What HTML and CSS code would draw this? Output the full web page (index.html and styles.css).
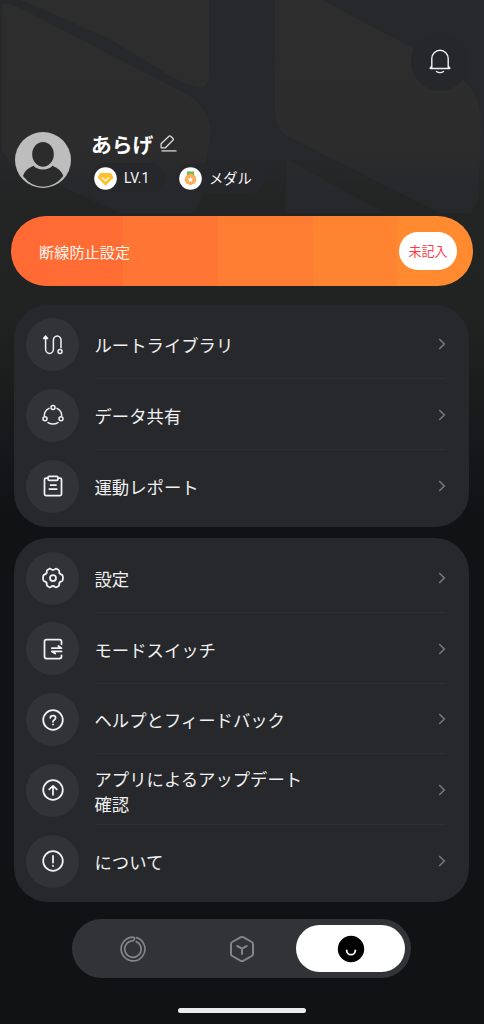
FILE: index.html
```html
<!DOCTYPE html>
<html lang="ja">
<head>
<meta charset="utf-8">
<title>マイページ</title>
<link rel="stylesheet" href="styles.css">
</head>
<body>
<main class="screen">
  <svg class="map" viewBox="0 0 484 540" aria-hidden="true">
    <defs>
      <linearGradient id="road" gradientUnits="userSpaceOnUse" x1="0" y1="0" x2="0" y2="540">
        <stop offset="0" stop-color="#27282c"/><stop offset=".26" stop-color="#27282c"/>
        <stop offset=".37" stop-color="#232524"/><stop offset=".58" stop-color="#212322"/>
        <stop offset=".95" stop-color="#111214"/>
      </linearGradient>
      <linearGradient id="land" gradientUnits="userSpaceOnUse" x1="0" y1="0" x2="0" y2="215">
        <stop offset="0" stop-color="#2d2d2d"/><stop offset=".68" stop-color="#2c2c2c"/>
        <stop offset=".9" stop-color="#27282c"/><stop offset="1" stop-color="#26272a"/>
      </linearGradient>
    </defs>
    <rect width="484" height="540" fill="url(#road)"/>
    <g fill="url(#land)">
      <path d="M22 0H209V74Q209 88 197 87Q185 84 174 78L110 39Z"/>
      <path d="M2 4Q10 3 20 8L180 91Q207 103 211 130L203 180Q202 205 195 213H120L10 162L2 150Z"/>
      <path d="M275 0H322L412 48L462 80Q478 90 481 120L478 200L470 213H440L287 136Q275 127 275 110Z"/>
      <path d="M287 160L385 213H285Z"/>
    </g>
  </svg>

  <header class="top">
    <button class="bell" aria-label="通知">
      <svg width="24" height="26" viewBox="0 0 24 26" fill="none" stroke="#f2f2f2" stroke-width="1.4" stroke-linecap="round" stroke-linejoin="round"><path d="M3.8 18.200V9.500a8.200 8.200 0 0 1 16.400 0v8.700M2.200 19.500H21.800L20.200 17M2.200 19.500L3.800 17M8.500 22.500q3.500 2.300 7 0"/></svg>
    </button>
  </header>

  <section class="profile">
    <svg class="avatar" viewBox="0 0 56 56"><circle cx="28" cy="28" r="28" fill="#bdbdbd"/><ellipse cx="28" cy="22.3" rx="10.8" ry="12.4" fill="#2c2c2c"/><path d="M8 44Q10 37 18.500 33.700Q22 37.500 28 37.500T37.500 33.700Q46 37 48.300 44Q40 54.700 28 54.700T8 44Z" fill="#2b2b2c"/></svg>
    <div class="info">
      <div class="name-row">
        <h1 class="name">あらげ</h1>
        <svg width="17" height="17" viewBox="0 0 17 17" fill="none" stroke="#ddd" stroke-width="1.25" stroke-linejoin="round"><path d="M1.100 12.800V8.700L9.200 1Q10 .6 10.700 1.200L13.200 3.800Q13.600 4.400 13.100 5L5.400 12.800Z"/><path d="M1.500 15.900H16.500"/></svg>
      </div>
      <div class="badges">
        <span class="badge badge-level"><svg class="badge-icon" viewBox="0 0 23 23"><circle cx="11.500" cy="11.500" r="11.300" fill="#fff"/><path d="M7 6H16Q17 6 17.600 7L19 9.700Q19.400 10.500 18.800 11.200L12.500 17.700Q11.500 18.700 10.500 17.700L4.200 11.200Q3.600 10.500 4 9.700L5.400 7Q6 6 7 6Z" fill="#ffc12e"/><path d="M8 10.500L11.500 13.600L15 10.500" fill="none" stroke="#fff" stroke-width="1.200"/></svg>LV.1</span>
        <span class="badge badge-medal"><svg class="badge-icon" viewBox="0 0 23 23"><circle cx="11.500" cy="11.500" r="11.300" fill="#fff"/><path d="M8 4.500H15V8H8Z" fill="#66bd4c"/><path d="M11.500 6.500Q13 6.500 14 7.800Q17 8.300 16.700 10.500Q18 12.500 16.700 14.500Q16.500 17 14 17Q11.500 19.300 9 17Q6.500 17 6.300 14.500Q5 12.500 6.300 10.500Q6.300 8.300 9 7.800Q10 6.500 11.500 6.500Z" fill="#ffac58"/><path d="M11.500 9.800L12.400 11.600L14.300 11.800L12.900 13.200L13.200 15.100L11.500 14.200L9.800 15.100L10.100 13.200L8.700 11.800L10.600 11.600Z" fill="#fff"/></svg>メダル</span>
      </div>
    </div>
  </section>

  <section class="banner">
    <span>断線防止設定</span>
    <button class="banner-tag">未記入</button>
  </section>

  <section class="card">
    <a class="row"><span class="disc"><svg class="icon" viewBox="0 0 24 24"><path d="M4.600 6V16a3.900 4.400 0 0 0 7.800 0V7.300a3.800 4.300 0 0 1 7.600 0V14.800"/><path d="M2.600 5.500L4.600 3L6.600 5.500Z" fill="#f2f2f2"/><circle cx="19" cy="18.500" r="2"/></svg></span><span class="cell"><span class="label">ルートライブラリ</span><svg class="chevron" viewBox="0 0 8 12"><path d="M1.200 1L6.300 6L1.200 11"/></svg></span></a>
    <a class="row"><span class="disc"><svg class="icon" viewBox="0 0 24 24"><circle cx="12" cy="4.400" r="2"/><circle cx="4" cy="15.800" r="2"/><circle cx="20" cy="15.800" r="2"/><path d="M8 5.300Q3.200 8 3.300 12.500M16 5.300Q20.800 8 20.700 12.500M7 19.600Q12 22.600 17 19.600"/></svg></span><span class="cell"><span class="label">データ共有</span><svg class="chevron" viewBox="0 0 8 12"><path d="M1.200 1L6.300 6L1.200 11"/></svg></span></a>
    <a class="row"><span class="disc"><svg class="icon bold" viewBox="0 0 24 24"><path d="M6.700 4H5Q3.500 4 3.500 5.500V20Q3.500 21.500 5 21.500H19Q20.500 21.500 20.500 20V5.500Q20.500 4 19 4H17.300"/><rect x="7" y="2.400" width="10" height="3.900" rx="1.300"/><path d="M9.500 11H15M8.300 15.100H15.700"/></svg></span><span class="cell"><span class="label">運動レポート</span><svg class="chevron" viewBox="0 0 8 12"><path d="M1.200 1L6.300 6L1.200 11"/></svg></span></a>
  </section>

  <section class="card card-settings">
    <a class="row"><span class="disc"><svg class="icon bold" viewBox="0 0 24 24"><path d="M8.500 2.700Q9.400 2.400 10 3.100Q12 4.900 14 3.100Q14.700 2.400 15.500 2.700L17.600 3.900Q18.300 4.300 18.200 5.200Q17.800 8 20.500 8.600Q21.400 8.900 21.700 9.700Q22.300 12 21.700 14.300Q21.400 15.100 20.500 15.400Q17.800 16 18.200 18.800Q18.300 19.700 17.600 20.100L15.500 21.300Q14.700 21.600 14 20.900Q12 19.100 10 20.900Q9.400 21.600 8.500 21.300L6.400 20.100Q5.700 19.700 5.800 18.800Q6.200 16 3.500 15.400Q2.600 15.100 2.300 14.300Q1.700 12 2.300 9.700Q2.600 8.900 3.500 8.600Q6.200 8 5.800 5.200Q5.700 4.300 6.400 3.900Z"/><circle cx="12" cy="12" r="3"/></svg></span><span class="cell"><span class="label">設定</span><svg class="chevron" viewBox="0 0 8 12"><path d="M1.200 1L6.300 6L1.200 11"/></svg></span></a>
    <a class="row"><span class="disc"><svg class="icon bold" viewBox="0 0 24 24"><path d="M20.500 7.300V4.500Q20.500 2.500 18.500 2.500H5.500Q3.500 2.500 3.500 4.500V19.500Q3.500 21.500 5.500 21.500H18.500Q20.500 21.500 20.500 19.500V18.300M10.800 11.200H20.500L17.300 9M20.500 14.400H10.800L14.300 16.500"/></svg></span><span class="cell"><span class="label">モードスイッチ</span><svg class="chevron" viewBox="0 0 8 12"><path d="M1.200 1L6.300 6L1.200 11"/></svg></span></a>
    <a class="row"><span class="disc"><svg class="icon bold" viewBox="0 0 24 24"><circle cx="12" cy="12" r="9.800"/><path d="M9.300 9.900Q9.400 7.500 12 7.500Q14.600 7.500 14.600 9.700Q14.600 11 13.200 11.900Q12 12.700 12 13.800M12 16.300V16.500"/></svg></span><span class="cell"><span class="label">ヘルプとフィードバック</span><svg class="chevron" viewBox="0 0 8 12"><path d="M1.200 1L6.300 6L1.200 11"/></svg></span></a>
    <a class="row"><span class="disc"><svg class="icon bold" viewBox="0 0 24 24"><circle cx="12" cy="12" r="9.800"/><path d="M12 16.800V7.800M8.200 11.400L12 7.800L15.800 11.400"/></svg></span><span class="cell"><span class="label">アプリによるアップデート確認</span><svg class="chevron" viewBox="0 0 8 12"><path d="M1.200 1L6.300 6L1.200 11"/></svg></span></a>
    <a class="row"><span class="disc"><svg class="icon bold" viewBox="0 0 24 24"><circle cx="12" cy="12" r="9.800"/><path d="M12 6.800V13.500M12 16.600V16.900"/></svg></span><span class="cell"><span class="label">について</span><svg class="chevron" viewBox="0 0 8 12"><path d="M1.200 1L6.300 6L1.200 11"/></svg></span></a>
  </section>

  <nav class="tabs">
    <a class="tab"><svg width="28" height="28" viewBox="0 0 28 28" fill="none" stroke="#858586" stroke-width="1.700" stroke-linecap="round"><path d="M17.500 2.600A11.900 11.900 0 1 1 13.500 2.100Q15.800 2.200 15.500 4.200Q15.200 5.700 13.500 5.900A8.200 8.200 0 1 0 17.300 6.600"/></svg></a>
    <a class="tab"><svg width="28" height="28" viewBox="0 0 28 28" fill="none" stroke="#858586" stroke-width="2" stroke-linejoin="round" stroke-linecap="round"><path d="M12.800 2.200Q14 1.600 15.200 2.200L23.800 7Q25 7.700 25 9V19Q25 20.300 23.800 21L15.200 25.800Q14 26.400 12.800 25.800L4.200 21Q3 20.300 3 19V9Q3 7.700 4.200 7Z"/><path d="M9.300 11L14 13.600L18.700 11M14 13.600V19"/></svg></a>
    <a class="tab active"><svg width="28" height="28" viewBox="0 0 28 28"><circle cx="14" cy="14" r="13.200" fill="#000"/><path d="M9.700 15.400a4.300 4.300 0 0 0 8.600 0" fill="none" stroke="#fff" stroke-width="1.800" stroke-linecap="round"/></svg></a>
  </nav>
  <div class="home-bar"></div>
</main>
</body>
</html>
```

FILE: styles.css
```css
* { box-sizing: border-box; }
body { margin: 0; background: #111214; }
button { border: 0; padding: 0; font: inherit; }

.screen {
  position: relative;
  z-index: 0;
  display: flex;
  flex-direction: column;
  width: 484px;
  height: 1024px;
  overflow: hidden;
  background: #111214;
  color: #f0f0f0;
  font-family: "Noto Sans CJK JP", sans-serif;
}
.map { position: absolute; inset: 0 auto auto 0; z-index: -1; width: 484px; height: 540px; }

.top { display: flex; justify-content: flex-end; height: 130px; padding: 33px 15px 0 0; }
.bell {
  display: grid;
  place-items: center;
  width: 58px;
  height: 58px;
  border-radius: 50%;
  background: #26272b;
}

.profile { display: flex; gap: 20px; height: 86px; padding: 2px 15px 0; }
.avatar { width: 56px; height: 56px; }
.info { display: flex; flex-direction: column; }
.name-row { display: flex; align-items: flex-start; gap: 7px; height: 31px; }
.name-row svg { margin-top: 3px; }
.name { margin: -3px 0 0; font-size: 20.800px; font-weight: 700; line-height: 30px; color: #fff; }
.badges { display: flex; gap: 11px; }
.badge {
  display: flex;
  align-items: center;
  gap: 7px;
  height: 30px;
  padding: 0 0 0 3px;
  border-radius: 15px;
  background: #26272b;
  font-size: 14.300px;
  line-height: 20px;
  color: #f4f4f4;
}
.badge-level { width: 74px; font-family: Roboto, "Noto Sans CJK JP", sans-serif; font-size: 14px; }
.badge-medal { width: 89px; }
.badge-icon { width: 23px; height: 23px; }

.banner {
  display: flex;
  flex: none;
  align-items: center;
  justify-content: space-between;
  width: 462px;
  height: 69.500px;
  margin-left: 11px;
  padding: 0 16px 0 28px;
  border-radius: 35px;
  background: linear-gradient(90deg, #ff6a35 0 41px, #ff6d34 41px 112px, #ff7534 112px 207px, #ff7c33 207px 302px, #ff8431 302px 386px, #ff8a30 386px);
  font-size: 15.200px;
  color: #fff4ee;
}
.banner-tag {
  width: 58px;
  height: 38px;
  border-radius: 19px;
  background: #fff;
  font-size: 13px;
  color: #fb3d4b;
}

.card {
  flex: none;
  width: 455px;
  height: 222.500px;
  margin: 19px 0 0 14px;
  padding: 3px 23px 0 12px;
  border-radius: 34px;
  background: #27282b;
}
.card-settings { height: 364px; margin-top: 11px; }
.row { display: flex; gap: 15.500px; height: 70.800px; }
.disc {
  display: grid;
  place-items: center;
  flex: none;
  width: 53px;
  height: 53px;
  margin-top: 10.500px;
  border-radius: 50%;
  background: #323336;
}
.icon { width: 24px; height: 24px; fill: none; stroke: #f2f2f2; stroke-width: 1.500; stroke-linecap: round; stroke-linejoin: round; }
.icon.bold { stroke-width: 1.750; }
.cell {
  display: flex;
  flex: 1;
  align-items: center;
  justify-content: space-between;
  height: 71.800px;
  padding-top: 4px;
  border-bottom: 1px solid #2e2f32;
}
.row:last-child .cell { border-color: transparent; }
.label { width: 216px; font-size: 17.350px; line-height: 25px; }
.chevron { width: 8px; height: 12px; margin: -1px 0 0; fill: none; stroke: #77787a; stroke-width: 1.600; }

.tabs {
  display: flex;
  flex: none;
  width: 339px;
  height: 59px;
  margin: 17px 0 0 72px;
  padding: 6px;
  border-radius: 30px;
  background: #323336;
}
.tab { display: grid; place-items: center; flex: 1; border-radius: 24px; }
.active { background: #fff; }
.home-bar { flex: none; width: 128px; height: 5px; margin: 29.500px 0 0 178px; border-radius: 3px; background: #ececec; }
```
